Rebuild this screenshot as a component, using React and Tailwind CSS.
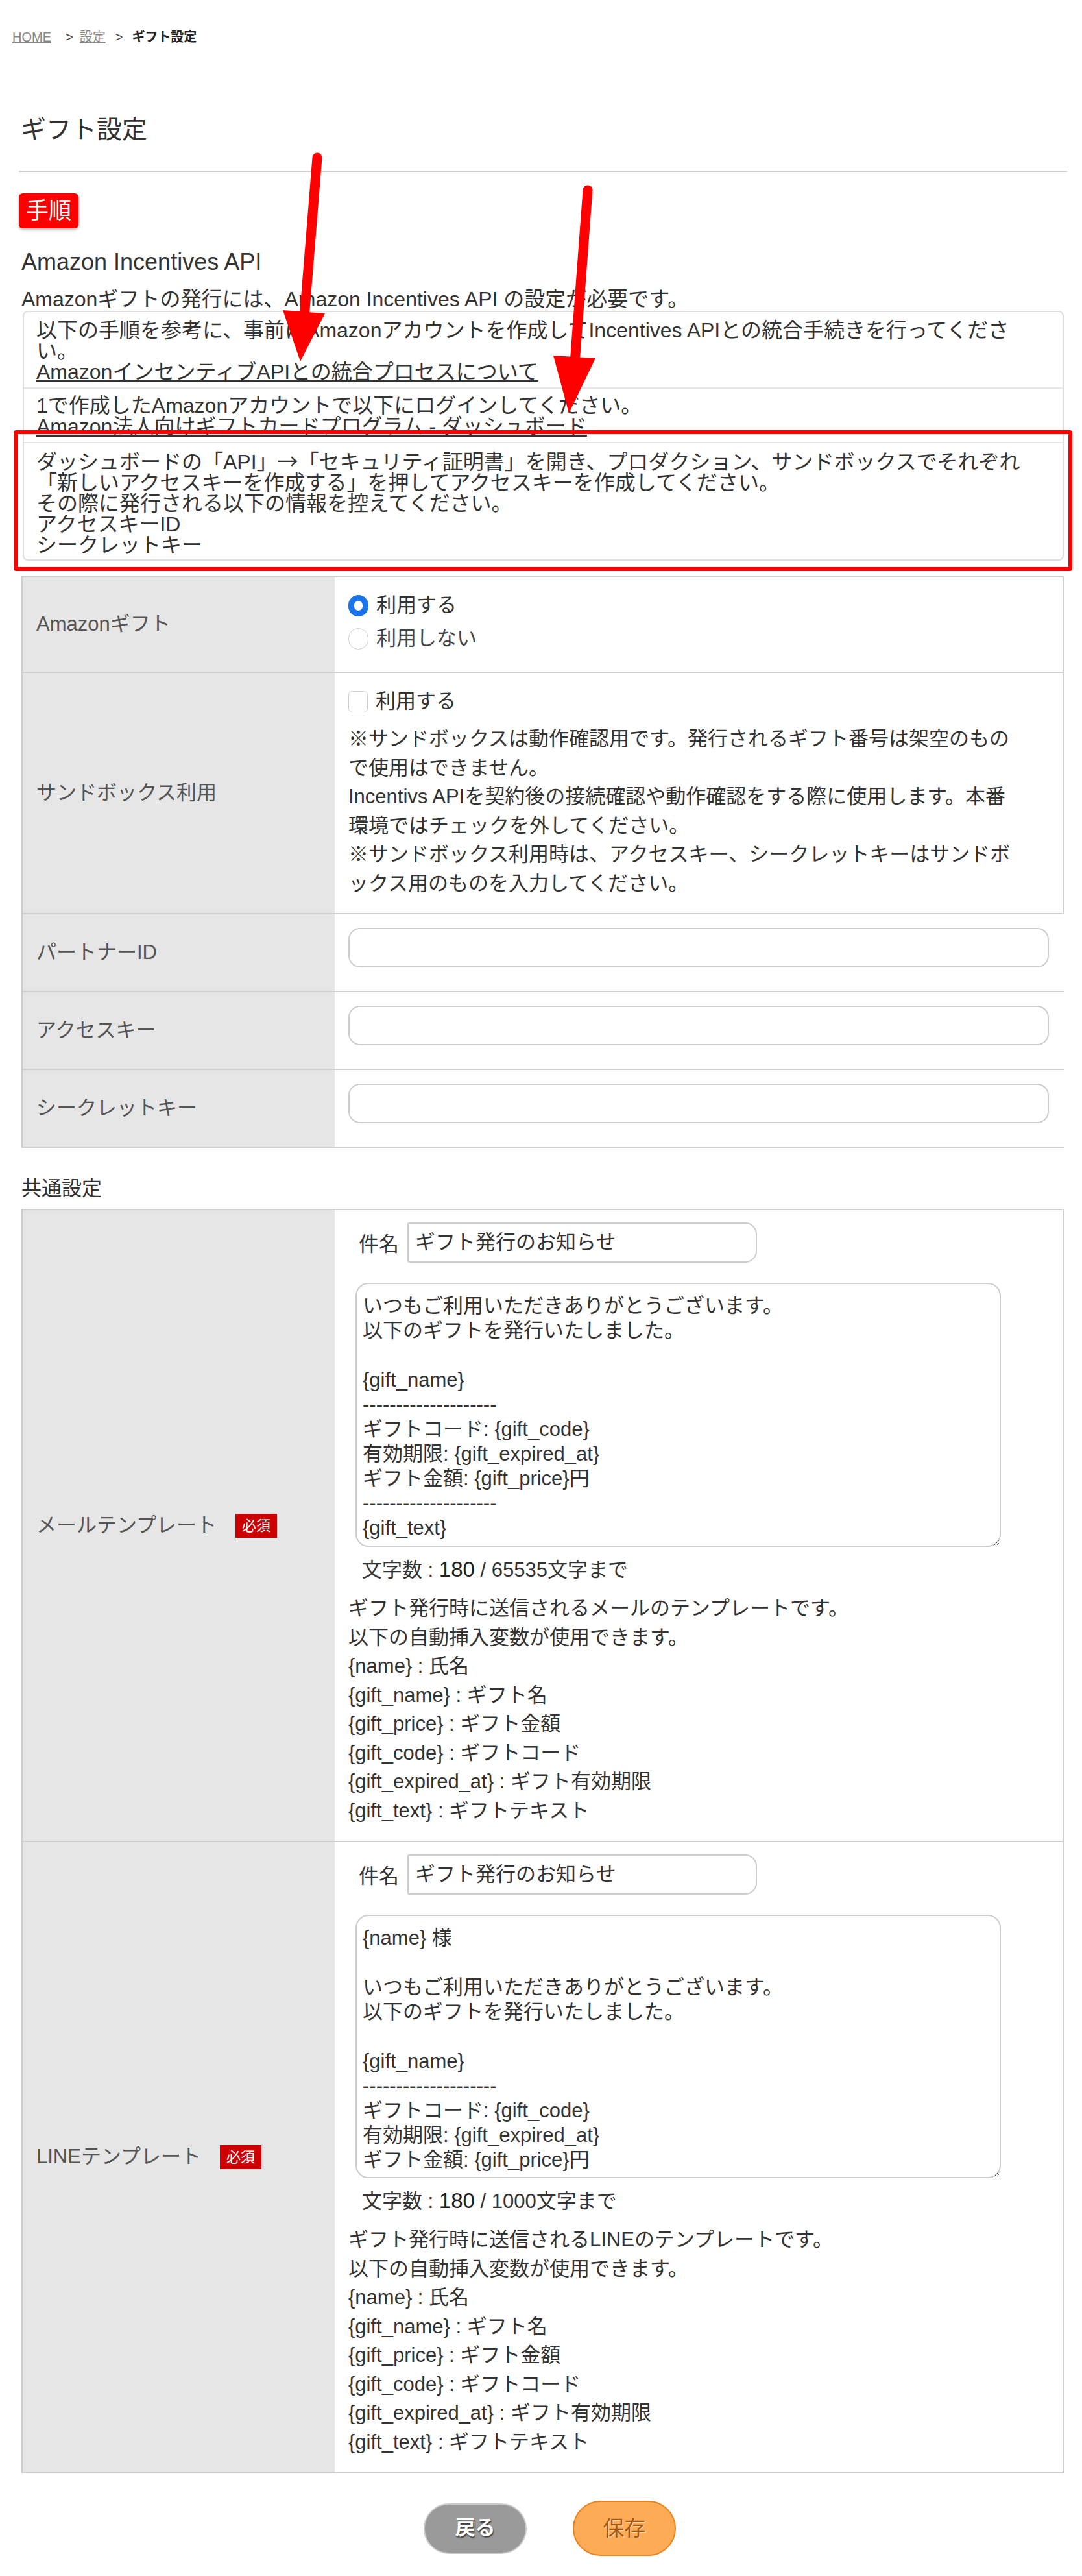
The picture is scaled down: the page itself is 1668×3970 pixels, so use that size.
import React from "react";

const FONT = "[font-family:'Liberation_Sans','Noto_Sans_CJK_JP',sans-serif]";

const sandboxNotes = [
  "※サンドボックスは動作確認用です。発行されるギフト番号は架空のもの",
  "で使用はできません。",
  "Incentivs APIを契約後の接続確認や動作確認をする際に使用します。本番",
  "環境ではチェックを外してください。",
  "※サンドボックス利用時は、アクセスキー、シークレットキーはサンドボ",
  "ックス用のものを入力してください。",
];

const vars = [
  "{name} : 氏名",
  "{gift_name} : ギフト名",
  "{gift_price} : ギフト金額",
  "{gift_code} : ギフトコード",
  "{gift_expired_at} : ギフト有効期限",
  "{gift_text} : ギフトテキスト",
];

const MAIL_BODY = `いつもご利用いただきありがとうございます。
以下のギフトを発行いたしました。

{gift_name}
--------------------
ギフトコード: {gift_code}
有効期限: {gift_expired_at}
ギフト金額: {gift_price}円
--------------------
{gift_text}`;

const LINE_BODY = `{name} 様

いつもご利用いただきありがとうございます。
以下のギフトを発行いたしました。

{gift_name}
--------------------
ギフトコード: {gift_code}
有効期限: {gift_expired_at}
ギフト金額: {gift_price}円
--------------------
{gift_text}`;

function Row({ label, required, children, first }) {
  return (
    <div className={`flex ${first ? "" : "border-t-2 border-[#cfcfcf]"}`}>
      <div className="w-[481px] shrink-0 bg-[#e6e6e6] flex items-center pl-[21px] text-[31px] text-[#555]">
        <span>{label}</span>
        {required && (
          <span className="ml-[29px] bg-[#cc0000] text-white text-[22px] leading-[37px] px-[10px]">必須</span>
        )}
      </div>
      <div className="flex-1 bg-white pl-[21px] pr-[30px]">{children}</div>
    </div>
  );
}

function InputRow({ label }) {
  return (
    <Row label={label}>
      <div className="pt-[21px] pb-[36px]">
        <div className="h-[61px] w-[1080px] rounded-[18px] border-2 border-[#cdcdcd] bg-white" />
      </div>
    </Row>
  );
}

function TemplateBlock({ body, limit, kind, height }) {
  return (
    <div className="pt-[19px] pb-[24px]">
      <div className="pl-[16px] flex items-center">
        <span className="text-[31px] leading-[40px] w-[75px] pt-[6px]">件名</span>
        <div className="h-[62px] w-[539px] border-2 border-[#cdcdcd] rounded-l-[3px] rounded-r-[18px] flex items-center px-[10px] text-[31px]">
          ギフト発行のお知らせ
        </div>
      </div>
      <textarea
        readOnly
        defaultValue={body}
        style={{ height }}
        className={`${FONT} mt-[31px] ml-[11px] block w-[995px] overflow-hidden resize-y rounded-[20px] border-2 border-[#cdcdcd] bg-white px-[9px] pt-[15px] text-[31px] leading-[38px] text-[#333] outline-none`}
      />
      <div className="mt-[13px] pl-[21px] text-[31px] leading-[44px]">
        文字数 : <span className="text-[33px] text-[#222]">180</span> / {limit}文字まで
      </div>
      <div className="mt-[15px] text-[31px] leading-[44.5px]">
        <div>ギフト発行時に送信される{kind}のテンプレートです。</div>
        <div>以下の自動挿入変数が使用できます。</div>
        {vars.map((v) => (
          <div key={v}>{v}</div>
        ))}
      </div>
    </div>
  );
}

export default function App() {
  return (
    <div className={`${FONT} relative w-[1668px] min-h-[3970px] bg-white text-[#333]`}>
      <div className="pl-[19px] pt-[44px] text-[20px] leading-[26px] flex items-center">
        <span className="underline text-[#888]">HOME</span>
        <span className="ml-[22px] text-[#444]">&gt;</span>
        <span className="ml-[10px] underline text-[#888]">設定</span>
        <span className="ml-[15px] text-[#444]">&gt;</span>
        <span className="ml-[14px] font-bold text-[#222]">ギフト設定</span>
      </div>

      <div className="pl-[33px] pr-[28px]">
        <h1 className="mt-[108px] text-[39px] leading-[44px] font-normal -ml-[1px]">ギフト設定</h1>
        <div className="mt-[41px] -ml-[4px] -mr-[5px] h-[2px] bg-[#cdcdcd]" />

        <div className="mt-[33px] -ml-[4px] w-[92px] h-[54px] rounded-[6px] bg-[#ff0000] text-white text-[35px] flex items-center justify-center shadow-[0_2px_4px_rgba(0,0,0,0.3)]">
          手順
        </div>

        <h2 className="mt-[30px] text-[36px] leading-[44px] font-normal">Amazon Incentives API</h2>
        <p className="mt-[17px] text-[32px] leading-[36px]">
          Amazonギフトの発行には、Amazon Incentives API の設定が必要です。
        </p>

        <div className="ml-[2px] rounded-[8px] border-2 border-[#dedede] text-[32px] leading-[32px]">
          <div className="pl-[19px] pt-[12px] pb-[8px]">
            以下の手順を参考に、事前にAmazonアカウントを作成してIncentives APIとの統合手続きを行ってくださ
            <br />
            い。
            <br />
            <span className="underline">AmazonインセンティブAPIとの統合プロセスについて</span>
          </div>
          <div className="border-t-2 border-[#e6e6e6] pl-[19px] pt-[10px] pb-[8px]">
            1で作成したAmazonアカウントで以下にログインしてください。
            <br />
            <span className="underline">Amazon法人向けギフトカードプログラム - ダッシュボード</span>
          </div>
          <div className="border-t-2 border-[#e6e6e6] pl-[19px] pt-[10px] pb-[6px]">
            ダッシュボードの「API」
            <span className="[font-family:'Noto_Sans_CJK_JP',sans-serif]">→</span>
            「セキュリティ証明書」を開き、プロダクション、サンドボックスでそれぞれ
            <br />
            「新しいアクセスキーを作成する」を押してアクセスキーを作成してください。
            <br />
            その際に発行される以下の情報を控えてください。
            <br />
            アクセスキーID
            <br />
            シークレットキー
          </div>
        </div>

        <div className="mt-[24px] border-2 border-[#cfcfcf]">
          <Row label="Amazonギフト" first>
            <div className="pt-[21px] pb-[28px] flex flex-col gap-[6px] text-[31px]">
              <label className="h-[45px] flex items-center gap-[12px]">
                <span className="w-[31px] h-[33px] rounded-full border-[9px] border-[#1a73e8] bg-white" />
                利用する
              </label>
              <label className="h-[45px] flex items-center gap-[12px] text-[#444]">
                <span className="w-[31px] h-[33px] rounded-full border border-[#cfcfcf] bg-white" />
                利用しない
              </label>
            </div>
          </Row>
          <Row label="サンドボックス利用">
            <div className="pt-[22px] pb-[23px] text-[31px]">
              <label className="h-[44px] flex items-center gap-[12px]">
                <span className="w-[30px] h-[33px] rounded-[6px] border border-[#cfcfcf] bg-white" />
                利用する
              </label>
              <div className="mt-[14px] leading-[44.5px]">
                {sandboxNotes.map((t) => (
                  <div key={t}>{t}</div>
                ))}
              </div>
            </div>
          </Row>
          <InputRow label="パートナーID" />
          <InputRow label="アクセスキー" />
          <InputRow label="シークレットキー" />
        </div>

        <h3 className="mt-[43px] text-[31px] leading-[40px] font-normal">共通設定</h3>

        <div className="mt-[11px] border-2 border-[#cfcfcf]">
          <Row label="メールテンプレート" required first>
            <TemplateBlock body={MAIL_BODY} limit="65535" kind="メール" height={407} />
          </Row>
          <Row label="LINEテンプレート" required>
            <TemplateBlock body={LINE_BODY} limit="1000" kind="LINE" height={406} />
          </Row>
        </div>

        <div className="mt-[42px] pb-[30px] flex items-center justify-center gap-[71px] pl-[22px]">
          <button className="w-[159px] h-[78px] rounded-full bg-[#9a9a9a] border-2 border-[#cacaca] text-white text-[31px] font-bold [text-shadow:1px_2px_2px_#333]">
            戻る
          </button>
          <button className="w-[159px] h-[85px] rounded-full bg-[#fdab55] border-2 border-[#e8821d] text-[#a5560f] text-[33px] [text-shadow:1px_1px_1px_#ffe1bd]">
            保存
          </button>
        </div>
      </div>

      {/* annotation overlay: red frame and arrows */}
      <div className="absolute left-[21px] top-[663px] w-[1632px] h-[217px] border-[6px] border-[#ff0000] rounded-[4px] pointer-events-none" />
      <svg className="absolute left-0 top-0 pointer-events-none" width="1668" height="700" viewBox="0 0 1668 700">
        <line x1="489" y1="243" x2="469" y2="490" stroke="#ff0000" strokeWidth="15" strokeLinecap="round" />
        <polygon points="436,478 501,483 463,557" fill="#ff0000" />
        <line x1="906" y1="293" x2="886" y2="560" stroke="#ff0000" strokeWidth="15" strokeLinecap="round" />
        <polygon points="853,548 918,552 877,637" fill="#ff0000" />
      </svg>
    </div>
  );
}
